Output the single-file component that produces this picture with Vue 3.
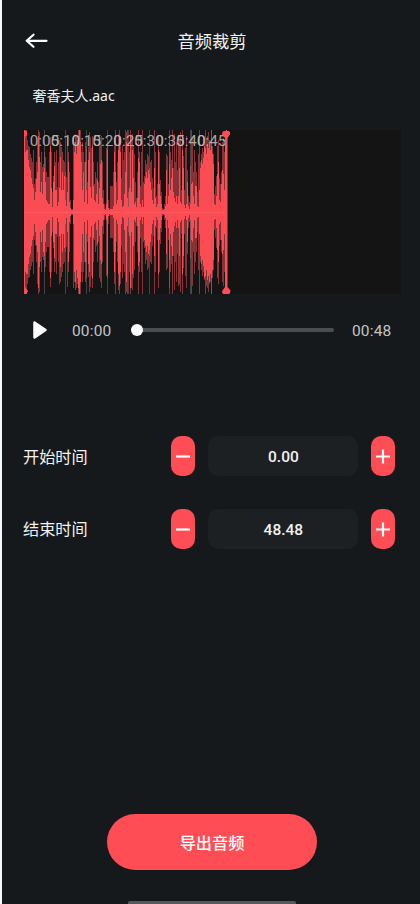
<script setup>
import { ref } from 'vue'

// One entry per pixel column: [solid half-height, faded half-height]
const levels = `
82,82 60,82 62,82 62,72 52,66 45,65 42,58 34,54 28,50 24,62 12,28 20,34 33,50 40,72 76,82 55,80
20,50 30,60 18,45 40,48 44,60 30,55 12,40 10,35 8,35 8,60 66,75 24,60 5,20 30,36 46,60 22,50
22,62 6,25 10,50 24,72 55,70 22,65 40,60 22,52 36,50 12,40 6,35 20,75 50,60 10,40 4,12 2,3
2,3 12,76 60,70 70,78 58,76 66,72 76,82 82,82 70,82 50,60 22,70 40,60 10,50 50,70 22,66 8,30
52,65 60,80 25,75 14,64 66,76 26,50 12,28 10,40 18,34 32,50 8,30 24,66 48,70 52,76 14,50 8,22
3,8 2,4 8,64 62,66 4,12 2,4 3,26 3,26 3,26 6,40 60,72 40,82 8,30 12,50 62,78 74,82
60,72 12,34 5,66 6,52 18,60 40,82 70,80 14,82 5,20 24,60 76,82 20,76 62,78 34,66 8,58 10,30
5,14 14,40 54,82 50,60 8,26 5,60 12,82 5,30 28,36 34,52 40,48 34,58 42,56 38,44 30,50 22,52
12,34 8,24 44,82 14,60 5,16 8,28 62,76 28,60 16,32 8,20 2,4 2,3 3,8 6,16 42,58 8,56
16,28 48,76 22,60 34,52 44,82 20,44 14,78 10,50 16,70 8,42 16,74 44,72 10,80 8,22 62,82 44,56
7,22 4,64 8,76 30,42 6,16 3,10 8,46 28,82 30,74 16,40 8,62 26,50 26,40 6,20 5,58 22,82
44,50 52,58 48,64 54,60 66,68 64,82 58,74 68,76 64,80 70,72 62,70 66,82 58,66 48,58 8,18 7,26
16,36 38,66 50,72 12,34 10,28 28,40 42,70 38,74 22,60 20,66 82,82`
  .trim()
  .split(/\s+/)
  .map((pair) => pair.split(',').map(Number))

const column = (x, half) => `M${x} ${82 - half}h1v${half * 2}h-1z`
const fadedPath = levels.map((l, i) => column(i + 1, l[1])).join('')
const solidPath = levels.map((l, i) => column(i + 1, l[0])).join('')

const ticks = ['0:05', '0:10', '0:15', '0:20', '0:25', '0:30', '0:35', '0:40', '0:45'].map(
  (label, i) => ({ label, x: 21.5 + i * 20.9 })
)

const rows = ref([
  { name: '开始时间', value: 0 },
  { name: '结束时间', value: 48.48 }
])
function step(row, delta) {
  row.value = Math.min(48.48, Math.max(0, row.value + delta))
}
</script>

<template>
  <main class="screen">
    <header class="header">
      <svg class="back" viewBox="0 0 24 16" aria-hidden="true">
        <path d="M21.500 7.800H1.700M8.500 1.700 1.700 7.800l6.800 6" />
      </svg>
      <h1 class="title">音频裁剪</h1>
    </header>
    <p class="filename">奢香夫人.aac</p>

    <svg class="wave" viewBox="0 0 378 164">
      <path class="faded" :d="fadedPath" />
      <path v-for="t in ticks" :key="t.label" class="grid" :d="`M${Math.floor(t.x) + 0.5} 0V164`" />
      <path class="solid" :d="solidPath" />
      <path class="axis" d="M1 82.5H203" />
      <text v-for="t in ticks" :key="t.label" class="tick" :x="t.x" y="15.500">{{ t.label }}</text>
      <path class="handle" d="M1 1h2.500q1 2 .5 4L2 7v150l3 4-1.500 3H1z" />
      <path class="handle" d="M200.500 1h5.500q1.500 1 1 3.500L204.500 8v149l3 3.500q0 2.500-1.500 3.500h-6q-1.500-2-.5-3.500l2.500-3.500V8L199 4.500q0-2.500 1.500-3.500z" />
    </svg>

    <section class="player">
      <svg class="play" viewBox="0 0 14 18" aria-hidden="true">
        <path d="M1.500 1.500v15L12.500 9z" />
      </svg>
      <span class="time">00:00</span>
      <div class="track"><i class="thumb"></i></div>
      <span class="time">00:48</span>
    </section>

    <section class="fields">
      <div v-for="row in rows" :key="row.name" class="row">
        <span class="label">{{ row.name }}</span>
        <button class="step" @click="step(row, -0.1)">
          <svg viewBox="0 0 16 16"><path d="M1 8.500H15" /></svg>
        </button>
        <div class="value">{{ row.value.toFixed(2) }}</div>
        <button class="step" @click="step(row, 0.1)">
          <svg viewBox="0 0 16 16"><path d="M1 8.500H15M8 1.500v14" /></svg>
        </button>
      </div>
    </section>

    <button class="export">导出音频</button>
    <div class="home-bar"></div>
  </main>
</template>

<style>
body {
  background: #f6f7f6;
}
</style>

<style scoped>
.screen {
  box-sizing: border-box;
  display: flex;
  flex-direction: column;
  height: 904px;
  margin-left: 2px;
  overflow: hidden;
  background: #15191c;
  color: #f2f2f2;
  font-family: Roboto, "Noto Sans CJK SC", sans-serif;
}
.header {
  display: grid;
  grid-template-columns: 24px 1fr 24px;
  align-items: center;
  height: 82px;
  padding: 0 23px;
}
.back {
  width: 24px;
  height: 16px;
  fill: none;
  stroke: #fff;
  stroke-width: 2.2;
  stroke-linecap: round;
  stroke-linejoin: round;
}
.title {
  margin: 0;
  padding: 2px 0 0 2px;
  font-size: 17.3px;
  line-height: 24px;
  font-weight: 400;
  text-align: center;
}
.filename {
  height: 20px;
  margin: 4px 0 24px 30.5px;
  font: 14px/20px "Noto Sans", "Noto Sans CJK SC", sans-serif;
}
.wave {
  flex: none;
  width: 378px;
  height: 164px;
  margin-left: 21px;
  background: #141414;
}
.faded {
  fill: #863236;
  shape-rendering: crispEdges;
}
.solid {
  fill: #fb4c53;
  shape-rendering: crispEdges;
}
.axis {
  stroke: #ff646a;
  stroke-opacity: 0.6;
}
.grid {
  stroke: #8a8a8a;
  stroke-opacity: 0.4;
}
.tick {
  fill: #b9b9bb;
  fill-opacity: 0.9;
  font-size: 15.3px;
  text-anchor: middle;
}
.handle {
  fill: #ff4d55;
}
.player {
  display: flex;
  align-items: center;
  height: 24px;
  margin: 24px 26px 0 31px;
}
.play {
  width: 14px;
  height: 18px;
  fill: #fff;
  stroke: #fff;
  stroke-width: 2.5;
  stroke-linejoin: round;
}
.time {
  width: 40px;
  padding-top: 2px;
  color: #c4c5c6;
  font-size: 15.5px;
  letter-spacing: 0.15px;
}
.play + .time {
  margin-left: 25px;
}
.track {
  display: flex;
  align-items: center;
  width: 203px;
  height: 4px;
  margin: 0 18px 0 19px;
  border-radius: 2px;
  background: #4b4e51;
}
.thumb {
  flex: none;
  width: 12px;
  height: 12px;
  border-radius: 50%;
  background: #fff;
}
.fields {
  display: grid;
  gap: 32.5px;
  margin: 94px 23px 0 21px;
}
.row {
  display: flex;
  align-items: center;
  height: 40px;
}
.label {
  width: 148px;
  padding-top: 3px;
  font-size: 16.2px;
  line-height: 24px;
}
.step {
  display: flex;
  align-items: center;
  justify-content: center;
  width: 24px;
  height: 40px;
  padding: 0;
  border: 0;
  border-radius: 10px;
  background: #ff4d55;
}
.step svg {
  flex: none;
  width: 16px;
  height: 16px;
  stroke: #fff;
  stroke-width: 2.2;
}
.value {
  width: 150px;
  height: 40px;
  margin: 0 13px 0 13.4px;
  border-radius: 10px;
  background: #1d2023;
  font-size: 15.5px;
  font-weight: 500;
  line-height: 42px;
  text-align: center;
}
.export {
  flex: none;
  width: 210px;
  height: 56px;
  margin: 265px 0 0 105px;
  padding: 0;
  border: 0;
  border-radius: 28px;
  background: #ff4d55;
  color: #fff;
  font: 500 16.2px/24px "Noto Sans CJK SC", sans-serif;
}
.home-bar {
  flex: none;
  width: 168px;
  height: 3px;
  margin: 31px 0 0 126px;
  border-radius: 2px 2px 0 0;
  background: #55585a;
}
</style>
